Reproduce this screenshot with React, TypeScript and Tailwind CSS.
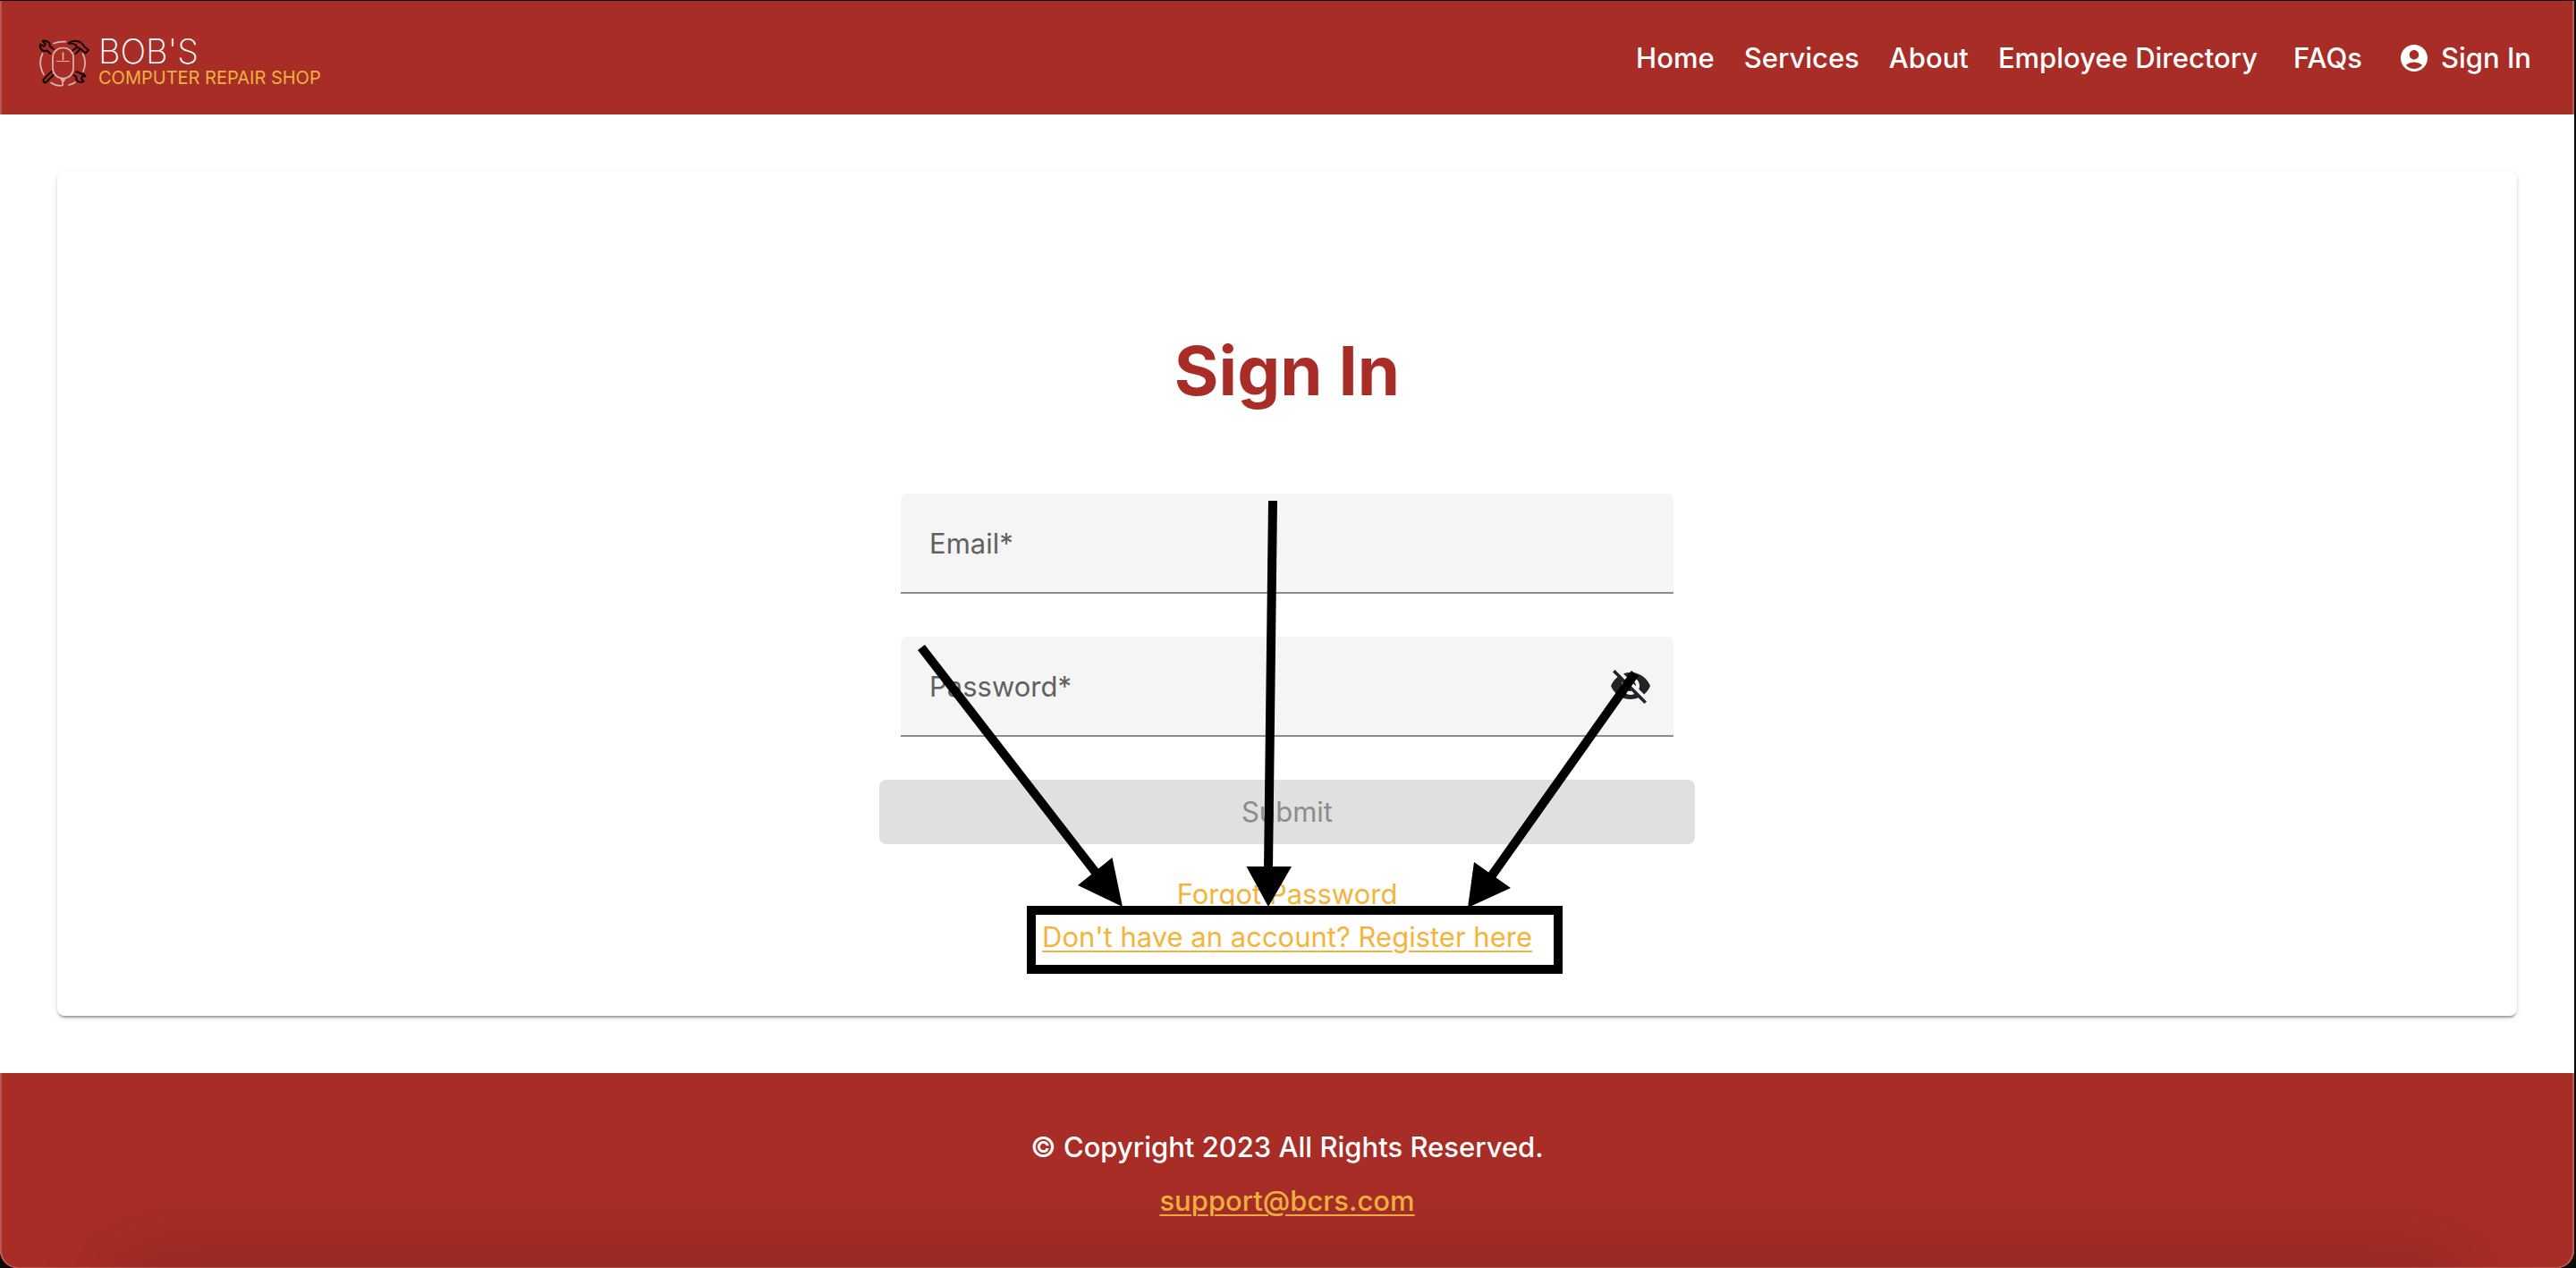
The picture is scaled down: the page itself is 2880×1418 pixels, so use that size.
import { MdAccountCircle, MdVisibilityOff } from "react-icons/md";

function LogoMark() {
  return (
    <svg viewBox="0 0 60 56" className="h-14 w-[60px]" fill="none" strokeLinecap="round" strokeLinejoin="round" aria-hidden="true">
      <g stroke="#d6b4b4" strokeWidth="1.7">
        <rect x="17" y="10.5" width="23" height="34" rx="11" />
        <path d="M28.500 16v7.500" />
        <path d="M21.500 25.500h14" strokeWidth="1" />
        <path d="M18 5.500Q24.500 3 31.500 3.700" />
        <path d="M5.500 17Q0 28 7 40.500" />
        <path d="M50.500 17Q55.500 27 51 37" />
        <path d="M15 49.500Q22 54 28 52.500V49M26.500 45.500h4l-2 3z" />
        <path d="M35 52Q39 51.200 42 49" />
      </g>
      <g stroke="#120505" strokeWidth="2">
        <path d="M18 12L13.500 8.500Q14.500 5 11 3.500Q8 2 5.500 3L9 6.500L7 9L3 6.500Q2 10 4.500 12.500Q7 15 10.500 13.500L14.500 17" />
        <path d="M34.500 5.500Q38 2 44 3Q50 4 52 9L57 13L53.500 16.500L49 12.500Q46 10 44 10L40 13M34.500 5.500Q39 5 42.500 7L44 10L39 13.500M47 12.500L42.500 17" />
        <path d="M15.500 37L6.500 46Q6 49 9 49.500L17.500 41" />
        <path d="M43 37.500Q45 36.500 48 39.500Q51.500 38.500 53.500 42.500L50 42L49 45L51.500 48Q47 50 44.500 47.500Q42.500 45.500 43.500 43L40.500 41" />
      </g>
    </svg>
  );
}

function Callouts() {
  return (
    <svg width="912" height="540" viewBox="0 0 912 540" className="pointer-events-none absolute top-0 left-0 overflow-visible" aria-hidden="true">
      <g stroke="#000" strokeWidth="10" fill="none">
        <path d="M47 172L243 425" />
        <path d="M440 8L435 420" />
        <path d="M845 201L685 427" />
        <rect x="170" y="466" width="589" height="66" />
      </g>
      <path d="M272 462L260.500 407L222 438zM435 462L410.500 417H461zM658 463L665 412L706 441z" />
    </svg>
  );
}

const links = ["Home", "Services", "About", "Employee Directory"];

export default function App() {
  return (
    <div className="min-h-screen bg-[#0d0a06] pt-px pr-[2px] font-[Inter,sans-serif] text-[31px] leading-[48px]">
      <div className="relative flex min-h-[calc(100vh-1px)] flex-col overflow-hidden rounded-b-[20px] bg-white">
        <header className="flex h-[127px] items-center justify-between bg-[#a82d27] pr-12 pl-[42px] font-medium text-white">
          <a href="#" className="flex items-center gap-2 pt-3">
            <LogoMark />
            <span className="flex flex-col">
              <span className="text-[38px] leading-8 font-extralight">BOB'S</span>
              <span className="text-[20px] leading-7 font-normal text-[#f0b23e]">COMPUTER REPAIR SHOP</span>
            </span>
          </a>
          <nav className="flex items-center gap-10">
            <div className="flex gap-[33px]">
              {links.map((l) => (
                <a key={l} href="#">{l}</a>
              ))}
            </div>
            <a href="#">FAQs</a>
            <a href="#" className="flex items-center gap-3">
              <MdAccountCircle className="size-9" />
              Sign In
            </a>
          </nav>
        </header>

        <main className="flex grow flex-col p-16">
          <section className="flex grow flex-col items-center rounded-lg bg-white pt-[174px] pb-16 shadow-[0_4px_2px_-2px_rgba(0,0,0,0.2),0_2px_2px_rgba(0,0,0,0.14),0_2px_6px_rgba(0,0,0,0.12)]">
            <h1 className="text-[76px] leading-[96px] font-bold text-[#a82d27]">Sign In</h1>
            <form className="relative mt-[90px] flex w-full max-w-[912px] flex-col" onSubmit={(e) => e.preventDefault()}>
              <div className="mx-6 flex flex-col gap-12">
                <div className="relative flex h-28 rounded-t-lg border-b-2 border-[#8c8c8c] bg-[#f5f5f5]">
                  <label htmlFor="email" className="absolute top-8 left-8 text-[#616161]">
                    Email<span>*</span>
                  </label>
                  <input id="email" type="email" required className="w-full px-8 pt-8 outline-none" />
                </div>
                <div className="relative flex h-28 items-center rounded-t-lg border-b-2 border-[#8c8c8c] bg-[#f5f5f5] pr-6">
                  <label htmlFor="password" className="absolute top-8 left-8 text-[#616161]">
                    Password<span>*</span>
                  </label>
                  <input id="password" type="password" required className="h-full w-full px-8 pt-8 outline-none" />
                  <button type="button" aria-label="Show password" className="text-[#212529]">
                    <MdVisibilityOff className="size-12" />
                  </button>
                </div>
              </div>
              <button type="submit" disabled className="mt-12 h-[72px] rounded-lg bg-[#e0e0e0] text-[#8c8c8c]">
                Submit
              </button>
              <div className="mt-8 flex flex-col items-center text-[#f4b43c]">
                <a href="#">Forgot Password</a>
                <a href="#" className="underline decoration-2 underline-offset-4">Don't have an account? Register here</a>
              </div>
              <Callouts />
            </form>
          </section>
        </main>

        <footer className="relative flex flex-col items-center gap-3 bg-[#a82d27] pt-[59px] pb-[51px] font-medium text-white">
          <p>© Copyright 2023 All Rights Reserved.</p>
          <a href="#" className="text-[#f0b23e] underline decoration-2 underline-offset-4">support@bcrs.com</a>
          <div className="pointer-events-none absolute inset-x-32 top-full h-10 shadow-[0_0_90px_rgba(0,0,0,0.3)]" />
        </footer>
        <div className="pointer-events-none absolute inset-0 rounded-b-[20px] border-x-2 border-b border-white/20" />
      </div>
    </div>
  );
}
